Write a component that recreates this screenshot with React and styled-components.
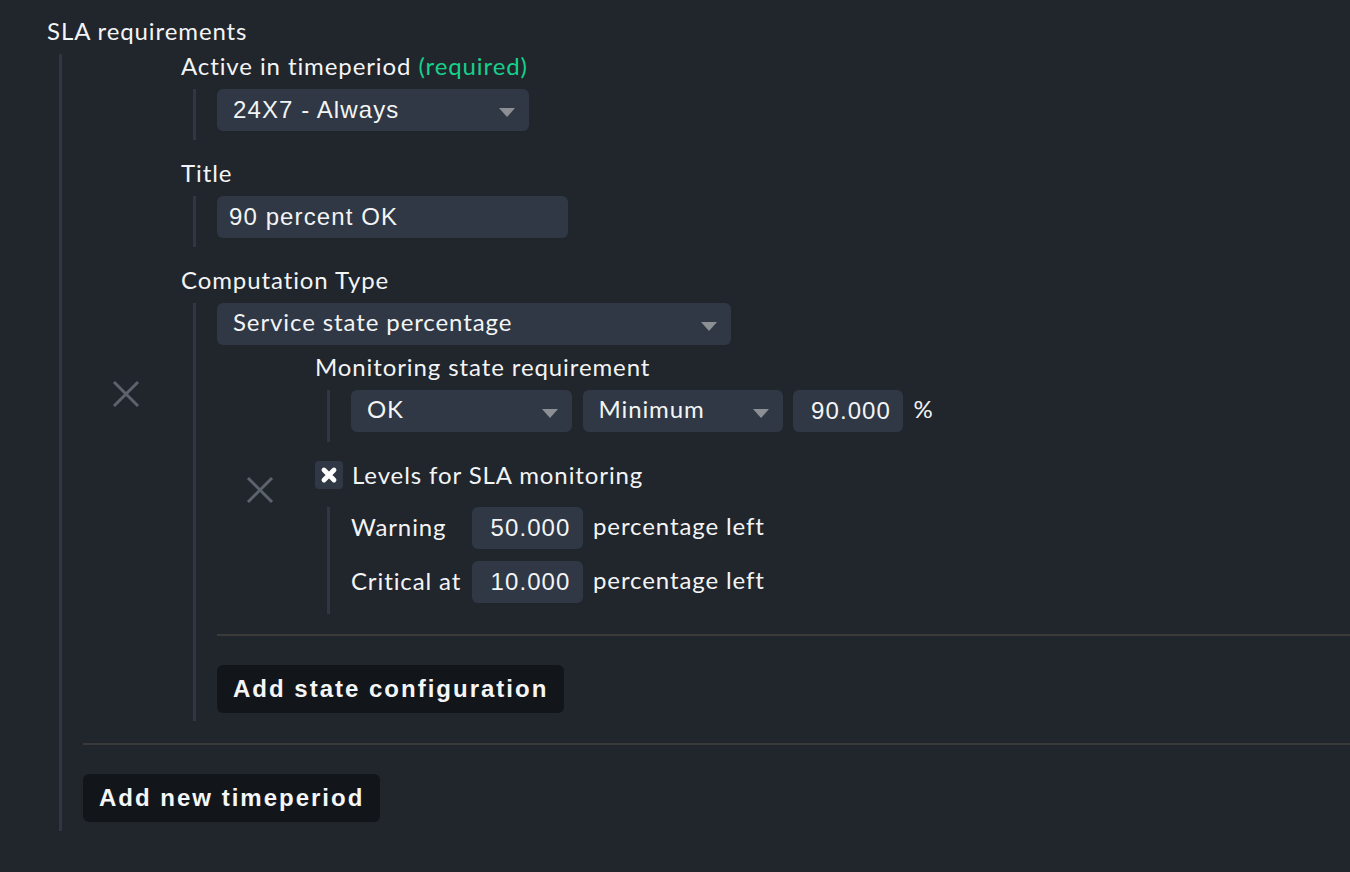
import React from 'react'
import styled, { createGlobalStyle } from 'styled-components'

const GlobalStyle = createGlobalStyle`
  html, body {
    margin: 0;
    padding: 0;
    background: #21252c;
  }
  body {
    font-family: Lato, "Noto Sans", sans-serif;
    color: #f3f4f5;
    font-size: 24px;
    letter-spacing: 0.9px;
  }
`

const Page = styled.div`
  width: 1350px;
  height: 872px;
  overflow: hidden;
  padding: 18px 0 0 47px;
  box-sizing: border-box;
`

const Heading = styled.div`
  line-height: 25px;
  margin-bottom: 11px;
`

const Entry = styled.div`
  display: flex;
  align-items: center;
`

const DelCell = styled.div`
  width: 86px;
  margin-right: 12px;
  flex: none;
  display: flex;
  justify-content: center;
  padding-bottom: ${({ $pb }) => $pb || 0}px;
`

const EntryBody = styled.div`
  flex: 1;
  display: flex;
  flex-direction: column;
`

const Label = styled.div`
  line-height: 24px;
  margin-bottom: 11px;
  white-space: nowrap;
`

const Required = styled.span`
  color: #15d18b;
`

const Value = styled.div`
  margin-left: 12px;
  border-left: 3px solid #2f3743;
  padding-left: 21px;
  padding-bottom: ${({ $pb }) => ($pb === undefined ? 9 : $pb)}px;
  margin-bottom: ${({ $mb }) => ($mb === undefined ? 21 : $mb)}px;
  display: flex;
  flex-direction: column;
  align-items: flex-start;
  gap: ${({ $gap }) => $gap || 0}px;
`

const Row = styled.div`
  display: flex;
  align-items: center;
  gap: 10.5px;
`

const SelectBox = styled.div`
  position: relative;
  width: ${({ $w }) => $w}px;
  height: 42px;
  box-sizing: border-box;
  background: #2f3844;
  border-radius: 6px;
  padding: ${({ $arial }) => ($arial ? '0 40px 0 16px' : '0 40px 5px 16px')};
  display: flex;
  align-items: center;
  font-family: ${({ $arial }) => ($arial ? '"Liberation Sans", Arial, sans-serif' : 'Lato, sans-serif')};
  letter-spacing: ${({ $arial }) => ($arial ? '1.1px' : '0.9px')};
  white-space: nowrap;
`

const Caret = styled.span`
  position: absolute;
  right: 14px;
  top: 19px;
  width: 0;
  height: 0;
  border-left: 8px solid transparent;
  border-right: 8px solid transparent;
  border-top: 9px solid #8c8f94;
`

const TextBox = styled.div`
  width: ${({ $w }) => $w}px;
  height: 42px;
  box-sizing: border-box;
  background: #2f3844;
  border-radius: 6px;
  padding: 0 12px;
  display: flex;
  align-items: center;
  justify-content: ${({ $right }) => ($right ? 'flex-end' : 'flex-start')};
  font-family: "Liberation Sans", Arial, sans-serif;
  letter-spacing: 1.1px;
  white-space: nowrap;
`

const Unit = styled.span`
  white-space: nowrap;
  padding-bottom: 5px;
`

const LevelLabel = styled.span`
  width: 110px;
  white-space: nowrap;
  padding-bottom: 4px;
`

const CheckRow = styled.div`
  display: flex;
  align-items: center;
  gap: 9px;
  height: 28px;
  margin-top: -1px;
  margin-bottom: 18px;
`

const CheckText = styled.span`
  padding-bottom: 2px;
`

const CheckBox = styled.span`
  width: 28px;
  height: 28px;
  border-radius: 4px;
  background: #2f3844;
  display: flex;
  align-items: center;
  justify-content: center;
`

const Rule = styled.div`
  height: 2px;
  background: #3a3a3b;
  margin: 0 0 29px 0;
`

const Button = styled.button`
  align-self: flex-start;
  height: 48px;
  padding: 0 16px 1px;
  border: none;
  border-radius: 6px;
  background: #12161b;
  color: #f5f6f7;
  font-family: "Liberation Sans", Arial, sans-serif;
  font-weight: bold;
  font-size: 24px;
  letter-spacing: 2px;
  cursor: pointer;
`

const InnerList = styled.div`
  display: flex;
  flex-direction: column;
  align-self: stretch;
  margin-right: -200px;
  padding-top: 10px;
`

const OuterList = styled.div`
  margin-left: 12px;
  border-left: 3px solid #2f3743;
  padding-left: 21px;
  padding-bottom: 9px;
  margin-right: -47px;
  display: flex;
  flex-direction: column;
`

const DeleteIcon = () => (
  <svg width="28" height="28" viewBox="0 0 28 28">
    <path d="M2 2 L26 26 M26 2 L2 26" stroke="#5c636c" strokeWidth="3" fill="none" />
  </svg>
)

const CrossMark = () => (
  <svg width="18" height="18" viewBox="0 0 18 18">
    <path d="M4 4 L14 14 M14 4 L4 14" stroke="#ffffff" strokeWidth="4.8" strokeLinecap="round" fill="none" />
  </svg>
)

const Select = ({ w, arial, children }) => (
  <SelectBox $w={w} $arial={arial}>
    {children}
    <Caret />
  </SelectBox>
)

const StateConfig = () => (
  <Entry>
    <DelCell $pb={9}>
      <DeleteIcon />
    </DelCell>
    <EntryBody>
      <Label>Monitoring state requirement</Label>
      <Value $mb={20} $pb={10}>
        <Row>
          <Select w={221}>OK</Select>
          <Select w={200}>Minimum</Select>
          <TextBox $w={110} $right>90.000</TextBox>
          <Unit>%</Unit>
        </Row>
      </Value>
      <CheckRow>
        <CheckBox>
          <CrossMark />
        </CheckBox>
        <CheckText>Levels for SLA monitoring</CheckText>
      </CheckRow>
      <Value $gap={12} $pb={11} $mb={20}>
        <Row>
          <LevelLabel>Warning</LevelLabel>
          <TextBox $w={111} $right>50.000</TextBox>
          <Unit>percentage left</Unit>
        </Row>
        <Row>
          <LevelLabel>Critical at</LevelLabel>
          <TextBox $w={111} $right>10.000</TextBox>
          <Unit>percentage left</Unit>
        </Row>
      </Value>
    </EntryBody>
  </Entry>
)

const Timeperiod = () => (
  <Entry>
    <DelCell $pb={10}>
      <DeleteIcon />
    </DelCell>
    <EntryBody>
      <Label>
        Active in timeperiod <Required>(required)</Required>
      </Label>
      <Value>
        <Select w={312} arial>24X7 - Always</Select>
      </Value>

      <Label>Title</Label>
      <Value>
        <TextBox $w={351}>90 percent OK</TextBox>
      </Value>

      <Label>Computation Type</Label>
      <Value $mb={22} $pb={8}>
        <Select w={514}>Service state percentage</Select>
        <InnerList>
          <StateConfig />
          <Rule />
          <Button>Add state configuration</Button>
        </InnerList>
      </Value>
    </EntryBody>
  </Entry>
)

export default function App() {
  return (
    <>
      <GlobalStyle />
      <Page>
        <Heading>SLA requirements</Heading>
        <OuterList>
          <Timeperiod />
          <Rule />
          <Button>Add new timeperiod</Button>
        </OuterList>
      </Page>
    </>
  )
}
